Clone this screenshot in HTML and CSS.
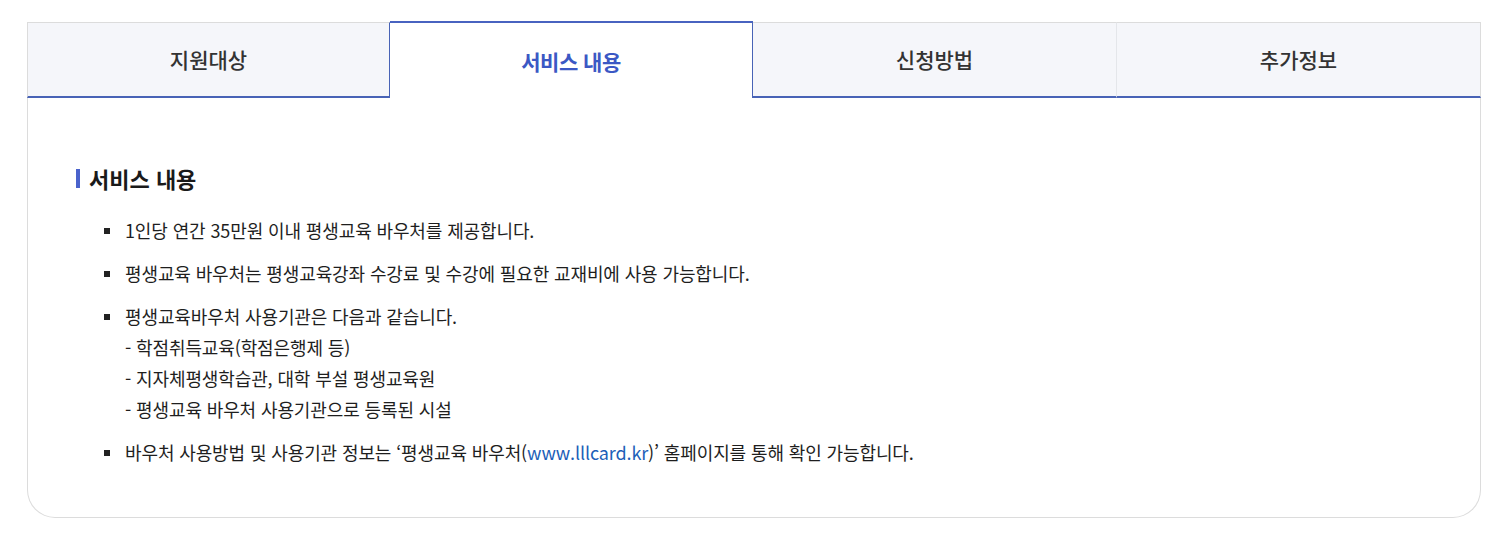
FILE: index.html
```html
<!DOCTYPE html>
<html lang="ko">
<head>
<meta charset="utf-8">
<title>서비스 내용</title>
<link rel="stylesheet" href="styles.css">
</head>
<body>
<div class="wrap">
  <div class="tabs">
    <div class="tab first">지원대상</div>
    <div class="tab active">서비스 내용</div>
    <div class="tab">신청방법</div>
    <div class="tab last">추가정보</div>
  </div>
  <div class="panel">
    <h3 class="title">서비스 내용</h3>
    <ul class="list">
      <li>1인당 연간 35만원 이내 평생교육 바우처를 제공합니다.</li>
      <li>평생교육 바우처는 평생교육강좌 수강료 및 수강에 필요한 교재비에 사용 가능합니다.</li>
      <li>평생교육바우처 사용기관은 다음과 같습니다.<br>- 학점취득교육(학점은행제 등)<br>- 지자체평생학습관, 대학 부설 평생교육원<br>- 평생교육 바우처 사용기관으로 등록된 시설</li>
      <li>바우처 사용방법 및 사용기관 정보는 ‘평생교육 바우처(<a class="link" href="#">www.lllcard.kr</a>)’ 홈페이지를 통해 확인 가능합니다.</li>
    </ul>
  </div>
</div>
</body>
</html>
```
FILE: styles.css
```css
* { box-sizing: border-box; }
html, body { margin: 0; padding: 0; background: #fff; }
body {
  font-family: "Noto Sans CJK KR", "Noto Sans", sans-serif;
  color: #222;
  padding: 21px 25px 0 27px;
}
.wrap { width: 1454px; }
.tabs {
  display: grid;
  grid-template-columns: 363px 363px 364px 364px;
  height: 77px;
}
.tab {
  display: flex;
  align-items: center;
  justify-content: center;
  background: #f5f6fa;
  border-top: 1px solid #dcdcdc;
  border-bottom: 2px solid #4863b6;
  border-right: 1px solid #e4e6ea;
  font-size: 21px;
  font-weight: 500;
  color: #333;
  margin-top: 1px;
  padding-bottom: 1px;
}
.tab.first { border-left: 1px solid #dcdcdc; border-right: 1px solid #4863b6; }
.tab.last { border-right: 1px solid #dcdcdc; }
.tab.active {
  background: #fff;
  margin-top: 0;
  border-top: 2px solid #4863c0;
  border-right: 1px solid #4863b6;
  border-bottom: none;
  color: #3b58c4;
  font-weight: 700;
  padding-bottom: 0;
  letter-spacing: -0.5px;
}
.panel {
  border: 1px solid #dcdcdc;
  border-top: none;
  border-radius: 0 0 28px 28px;
  padding: 65px 48px 49px 48px;
}
.title {
  margin: 0;
  font-size: 22px;
  line-height: 30px;
  font-weight: 700;
  color: #1a1a1a;
  display: flex;
  align-items: center;
  gap: 9px;
}
.title::before {
  content: "";
  width: 4px;
  height: 19px;
  background: #4a63cc;
}
.list {
  list-style: none;
  margin: 22px 0 0 0;
  padding: 0 0 0 49px;
  font-size: 18px;
  line-height: 31px;
  color: #1e1e1e;
  letter-spacing: -0.12px;
}
.list li { position: relative; margin-bottom: 12px; }
.list li:last-child { margin-bottom: 0; }
.list li::before {
  content: "";
  position: absolute;
  left: -21px;
  top: 13px;
  width: 6px;
  height: 6px;
  background: #222;
}
.link { color: #1d5fb8; text-decoration: none; }
```
